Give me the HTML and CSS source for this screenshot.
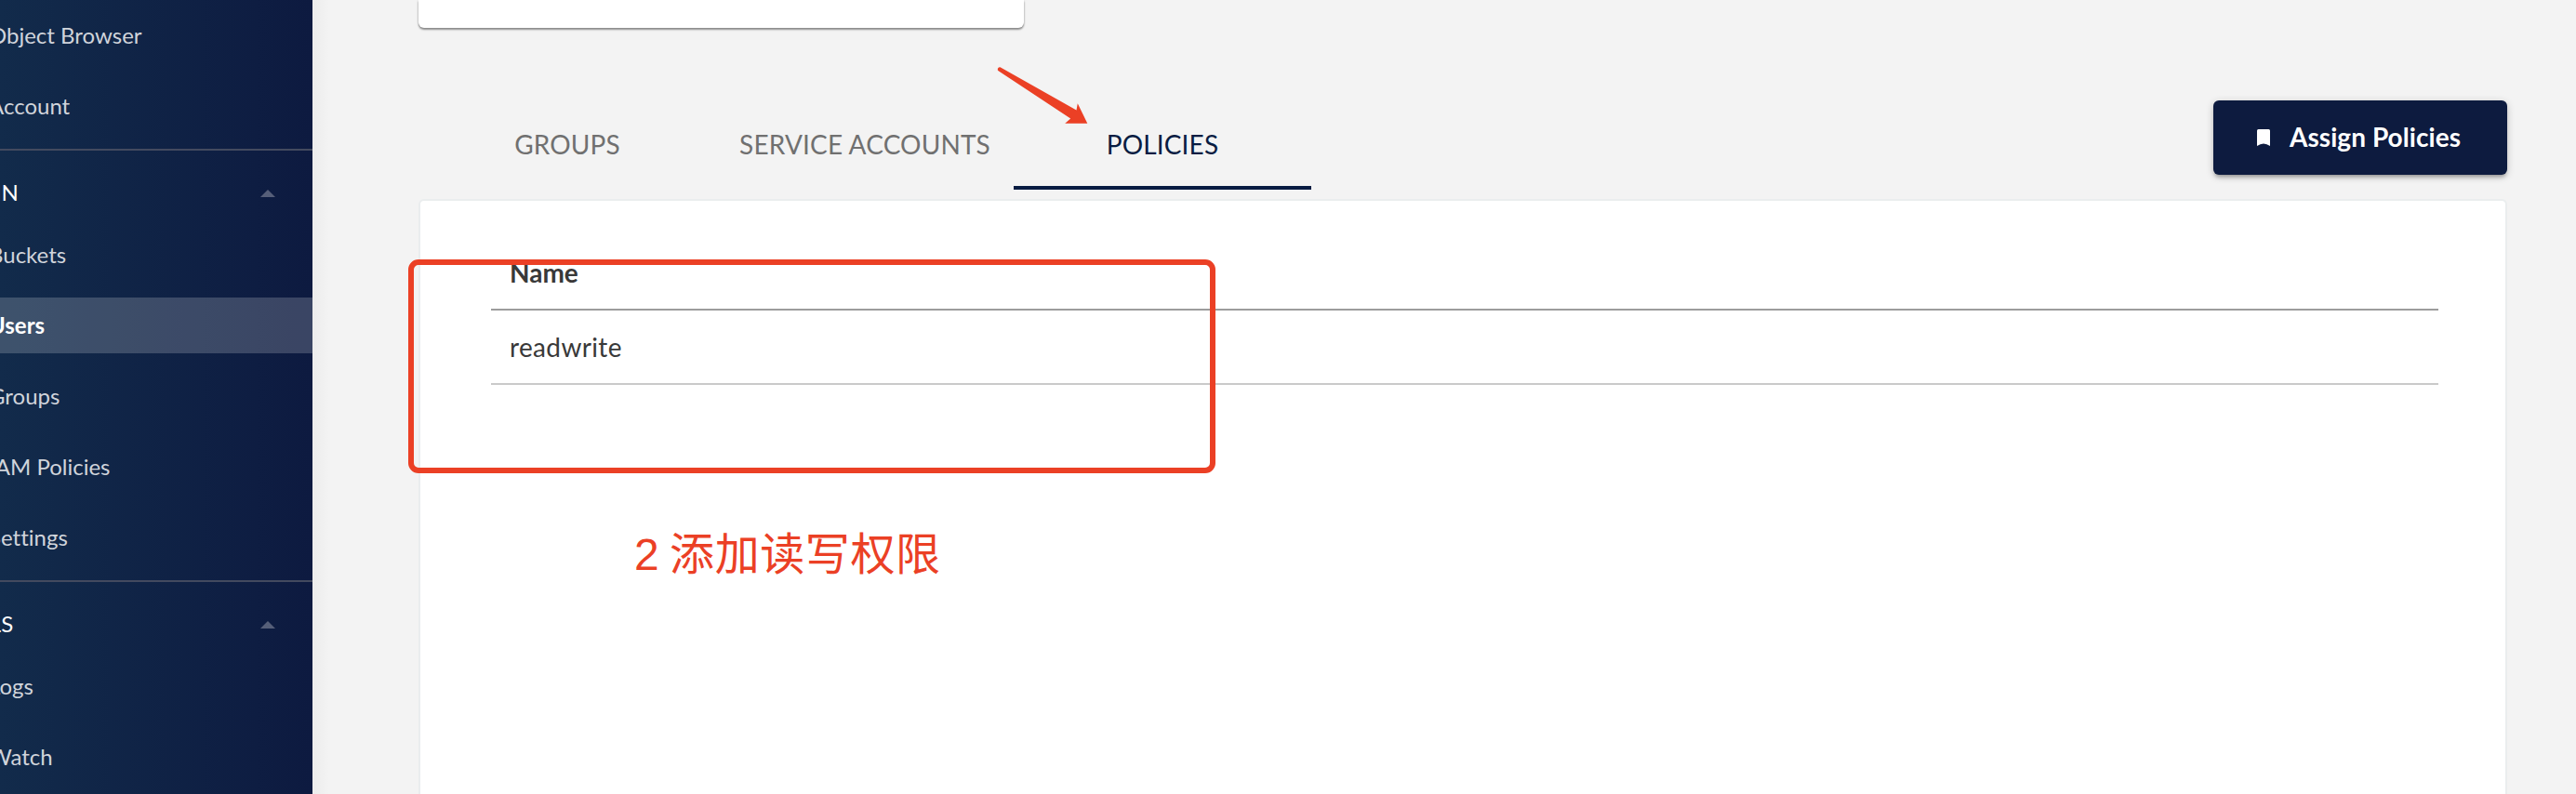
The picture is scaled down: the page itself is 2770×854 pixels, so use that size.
FILE: index.html
```
<!DOCTYPE html>
<html lang="en">
<head>
<meta charset="utf-8">
<title>Users</title>
<link rel="stylesheet" href="styles.css">
</head>
<body>
<div class="app">
  <nav class="sidebar">
    <div class="menu">
      <a class="item">Object Browser</a>
      <a class="item">Account</a>
    </div>
    <div class="section"><span class="title admin">ADMIN</span><span class="caret"></span></div>
    <div class="menu">
      <a class="item">Buckets</a>
      <a class="item active">Users</a>
      <a class="item">Groups</a>
      <a class="item">IAM Policies</a>
      <a class="item">Settings</a>
    </div>
    <div class="section"><span class="title tools">TOOLS</span><span class="caret"></span></div>
    <div class="menu">
      <a class="item">Logs</a>
      <a class="item">Watch</a>
    </div>
  </nav>
  <main class="content">
    <div class="card"></div>
    <div class="toolbar">
      <div class="tabs">
        <div class="tab">GROUPS</div>
        <div class="tab">SERVICE ACCOUNTS</div>
        <div class="tab selected">POLICIES</div>
      </div>
      <button class="assign">
        <svg class="bookmark" width="14" height="18" viewBox="0 0 14 18"><path d="M1.500 0H12.500Q14 0 14 1.500V18Q7 13 0 18V1.500Q0 0 1.500 0Z" fill="#fff"/></svg>
        <span class="assign-label">Assign Policies</span>
      </button>
    </div>
    <section class="panel">
      <div class="row head">Name</div>
      <div class="row">readwrite</div>
    </section>
  </main>
  <svg class="arrow" width="100" height="64" viewBox="0 0 100 64"><path d="M5.500 2.200L87.500 48.500L88.800 41.300L99.300 62.800L75.200 62.800L81.200 57.600L4 6.500A2.300 2.300 0 0 1 5.500 2.200Z" fill="#eb4025"/></svg>
  <div class="highlight"></div>
  <div class="note">2 <span class="note-cjk" lang="zh-CN">添加读写权限</span></div>
</div>
</body>
</html>
```
FILE: styles.css
```
* { box-sizing: border-box; }
body {
  margin: 0;
  background: #f3f3f3;
  font-family: Lato, "Liberation Sans", sans-serif;
}
.app {
  position: relative;
  display: flex;
  height: 854px;
  overflow: hidden;
}
.sidebar {
  flex: 0 0 336px;
  padding-top: 8px;
  overflow: hidden;
  background: linear-gradient(90deg, #122b4b 0%, #0d1a40 100%);
  white-space: nowrap;
}
.menu {
  display: flex;
  flex-direction: column;
  gap: 16px;
}
.item {
  height: 60px;
  line-height: 59px;
  font-size: 24px;
  font-variant-ligatures: none;
  text-indent: -12px;
  color: #d0d4db;
}
.item.active {
  background: rgba(255, 255, 255, 0.19);
  font-weight: 700;
  color: #fff;
}
.section {
  display: flex;
  align-items: center;
  justify-content: space-between;
  height: 84px;
  margin-top: 16px;
  padding-right: 40px;
  border-top: 2px solid #434a5f;
}
.title {
  padding-top: 6px;
  font-size: 24px;
  color: #fff;
}
.admin { margin-left: -62px; }
.tools { margin-left: -63px; }
.caret {
  margin-top: 10px;
  border: 8px solid transparent;
  border-top: 0;
  border-bottom-color: #565f79;
}
.content {
  display: flex;
  flex: 1;
  flex-direction: column;
  min-width: 0;
  padding: 0 74px 0 114px;
  background: linear-gradient(90deg, #ececec, #f3f3f3 18px);
}
.card {
  width: 651px;
  height: 30px;
  flex: none;
  background: #fff;
  border-radius: 0 0 6px 6px;
  box-shadow: 0 2px 2px rgba(0, 0, 0, 0.4), 0 0 3px rgba(0, 0, 0, 0.15);
}
.toolbar {
  display: flex;
  justify-content: space-between;
  align-items: flex-start;
  height: 184px;
  flex: none;
  padding-top: 78px;
}
.tabs {
  display: flex;
  height: 96px;
}
.tab {
  width: 320px;
  padding-top: 30px;
  border-bottom: 4px solid transparent;
  font-size: 28px;
  line-height: 34px;
  letter-spacing: 0.15px;
  text-align: center;
  white-space: nowrap;
  color: #707070;
}
.tab.selected {
  border-bottom-color: #081c42;
  color: #081c42;
}
.assign {
  display: flex;
  align-items: center;
  gap: 21px;
  width: 316px;
  height: 80px;
  padding: 0 0 0 47px;
  border: 0;
  border-radius: 6px;
  background: #0d1b3f;
  box-shadow: 0 4px 4px -2px rgba(0, 0, 0, 0.3), 0 2px 8px rgba(0, 0, 0, 0.2);
  font: 700 28px Lato, sans-serif;
  color: #fff;
  white-space: nowrap;
}
.assign-label { padding-bottom: 2px; letter-spacing: 0.05px; }
.panel {
  flex: 1;
  padding: 38px 72px 0 76px;
  background: #fff;
  border: 2px solid #eaedee;
  border-bottom: 0;
  border-radius: 6px 6px 0 0;
}
.row {
  height: 80px;
  padding: 0 20px;
  border-bottom: 2px solid #cacaca;
  font-size: 28px;
  line-height: 79px;
  letter-spacing: 0.35px;
  color: #393939;
}
.row.head {
  border-bottom-color: #9c9c9c;
  font-weight: 700;
  letter-spacing: 0;
}
.arrow {
  position: absolute;
  left: 1070px;
  top: 70px;
}
.highlight {
  position: absolute;
  left: 439px;
  top: 279px;
  width: 868px;
  height: 230px;
  border: 6px solid #eb4025;
  border-radius: 11px;
}
.note {
  position: absolute;
  left: 682px;
  top: 557px;
  font: 48px/70px "Liberation Sans", "Noto Sans CJK SC", sans-serif;
  color: #eb4025;
  white-space: nowrap;
}
.note-cjk {
  margin-left: -2px;
  font-family: "Noto Sans CJK SC", sans-serif;
  letter-spacing: 0.6px;
}
```
